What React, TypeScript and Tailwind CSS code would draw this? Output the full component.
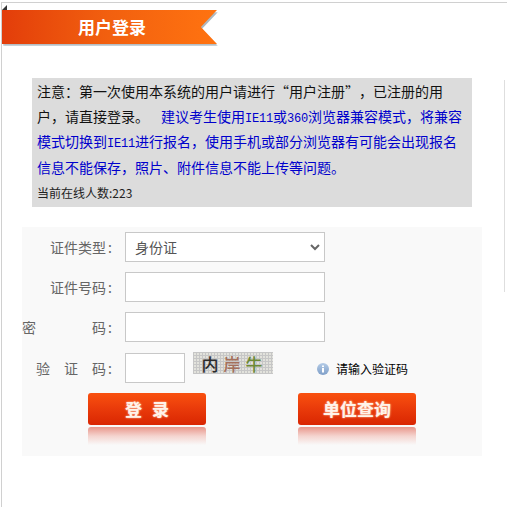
const font = { fontFamily: '"Noto Sans CJK SC", "Liberation Sans", sans-serif' };

function Colon() {
  return <span className="ml-[2px] mr-[1px]">:</span>;
}

function Field({ label, children }: { label: React.ReactNode; children: React.ReactNode }) {
  return (
    <div className="flex items-center h-[30px]">
      <div className="w-[91px] shrink-0 flex justify-end items-center text-[14px] text-[#666] whitespace-nowrap">{label}<Colon /></div>
      <div className="ml-[12px]">{children}</div>
    </div>
  );
}

function RedButton({ children }: { children: React.ReactNode }) {
  return (
    <div className="w-[118px] flex flex-col">
      <div className="h-[32px] rounded-[3px] bg-gradient-to-b from-[#f9500f] via-[#e93a0a] to-[#d92502] flex items-center justify-center text-[#fff3ea] font-bold text-[17px] [text-shadow:0_0_2px_#ffd9c0]">
        {children}
      </div>
      <div className="mt-[2px] h-[18px] rounded-t-[3px] bg-gradient-to-b from-[#e7968c] via-[#f4d4cf] to-[#f9f9f9]" />
    </div>
  );
}

function Latin({ children }: { children: React.ReactNode }) {
  return <span className="font-['Liberation_Mono'] text-[12px] leading-[14px] tracking-[-0.2px]">{children}</span>;
}

export default function App() {
  return (
    <div style={font} className="relative w-[507px] h-[507px] overflow-hidden bg-white">
      <div className="absolute right-[2px] top-[80px] h-[212px] w-px bg-[#dedede]" />
      <div className="mt-[2px] ml-[1px] h-[505px] border-t border-l border-[#d0d0d0] pt-[7px]">
        {/* ribbon */}
        <div className="relative w-[215px] h-[35px]">
          <div className="absolute left-[1px] top-[2px] w-[215px] h-[34px] bg-[#aeb8c0] blur-[1px] [clip-path:polygon(0_0,100%_0,92.5%_50%,100%_100%,0_100%)]" />
          <div className="relative h-[34px] flex items-center justify-center pl-[5px] text-white font-bold text-[17px] bg-gradient-to-r from-[#e33d0a] via-[#f2600f] to-[#ff7310] [clip-path:polygon(0_0,100%_0,92.5%_50%,100%_100%,0_100%)]">
            用户登录
          </div>
          <div className="absolute left-0 -top-[5px] w-0 h-0 border-l-[5px] border-l-transparent border-b-[5px] border-b-[#333]" />
        </div>

        {/* notice */}
        <div className="ml-[30px] mt-[33px] w-[440px] h-[129px] bg-[#dcdcdc] pl-[5px] pr-[8px] py-[1px]">
          <p className="text-[14px] leading-[25.2px] text-[#111] [text-spacing-trim:space-all]">
            注意：第一次使用本系统的用户请进行“用户注册”，已注册的用户，请直接登录。
            <span className="ml-[12px] text-[#0000cc]">
              建议考生使用<Latin>IE11</Latin>或<Latin>360</Latin>浏览器兼容模式，将兼容模式切换到<Latin>IE11</Latin>进行报名，使用手机或部分浏览器有可能会出现报名信息不能保存，照片、附件信息不能上传等问题。
            </span>
          </p>
          <p className="mt-[3px] text-[12px] leading-[20px] text-[#222]">当前在线人数:223</p>
        </div>

        {/* form */}
        <div className="ml-[20px] mt-[20px] w-[460px] h-[229px] bg-[#f9f9f9] pt-[5px]">
          <div className="flex flex-col gap-[10px]">
            <Field label="证件类型">
              <div className="w-[200px] h-[30px] border border-[#c8c8c8] bg-white flex items-center justify-between pl-[9px] pr-[3px] text-[14px] text-[#555]">
                <span>身份证</span>
                <svg width="12" height="8" viewBox="0 0 12 8" fill="none" stroke="#666" strokeWidth="2"><path d="M2 2l4 4 4-4" /></svg>
              </div>
            </Field>
            <Field label="证件号码">
              <div className="w-[200px] h-[30px] border border-[#c8c8c8] bg-white" />
            </Field>
            <Field label={<><span className="mr-[56px]">密</span><span>码</span></>}>
              <div className="w-[200px] h-[30px] border border-[#c8c8c8] bg-white" />
            </Field>
          </div>
          <div className="mt-[11px] flex items-start">
            <div className="w-[91px] h-[30px] shrink-0 flex justify-end items-center text-[14px] text-[#666] whitespace-nowrap">
              <span className="mr-[14px]">验</span><span className="mr-[14px]">证</span><span>码</span><Colon />
            </div>
            <div className="ml-[12px] w-[60px] h-[30px] border border-[#c8c8c8] bg-white" />
            <div className="ml-[8px] -mt-[1px] w-[80px] h-[22px] bg-[#e2e2dc] bg-[repeating-linear-gradient(90deg,#c6c6c6_0,#c6c6c6_1px,transparent_1px,transparent_3px),repeating-linear-gradient(0deg,#c6c6c6_0,#c6c6c6_1px,transparent_1px,transparent_3px)] flex items-center justify-center gap-[5px] pr-[2px] text-[17px] leading-none font-medium">
              <span className="text-[#2a2a2a]">内</span>
              <span className="text-[#a5705c]">岸</span>
              <span className="text-[#6c8a35]">牛</span>
            </div>
            <div className="ml-[44px] mt-[7px] flex items-center gap-[7px] text-[12px] text-black">
              <svg width="12" height="12" viewBox="0 0 12 12">
                <defs>
                  <linearGradient id="inf" x1="0" y1="0" x2="0" y2="1">
                    <stop offset="0" stopColor="#b4cbe6" />
                    <stop offset="1" stopColor="#7f9fc8" />
                  </linearGradient>
                </defs>
                <circle cx="6" cy="6" r="6" fill="url(#inf)" />
                <rect x="5" y="5" width="2" height="4.5" fill="#fff" />
                <rect x="5" y="2.5" width="2" height="1.6" fill="#fff" />
              </svg>
              <span>请输入验证码</span>
            </div>
          </div>
          <div className="mt-[10px] ml-[66px] flex gap-[92px]">
            <RedButton><span className="mr-[10px]">登</span><span>录</span></RedButton>
            <RedButton>单位查询</RedButton>
          </div>
        </div>
      </div>
    </div>
  );
}
